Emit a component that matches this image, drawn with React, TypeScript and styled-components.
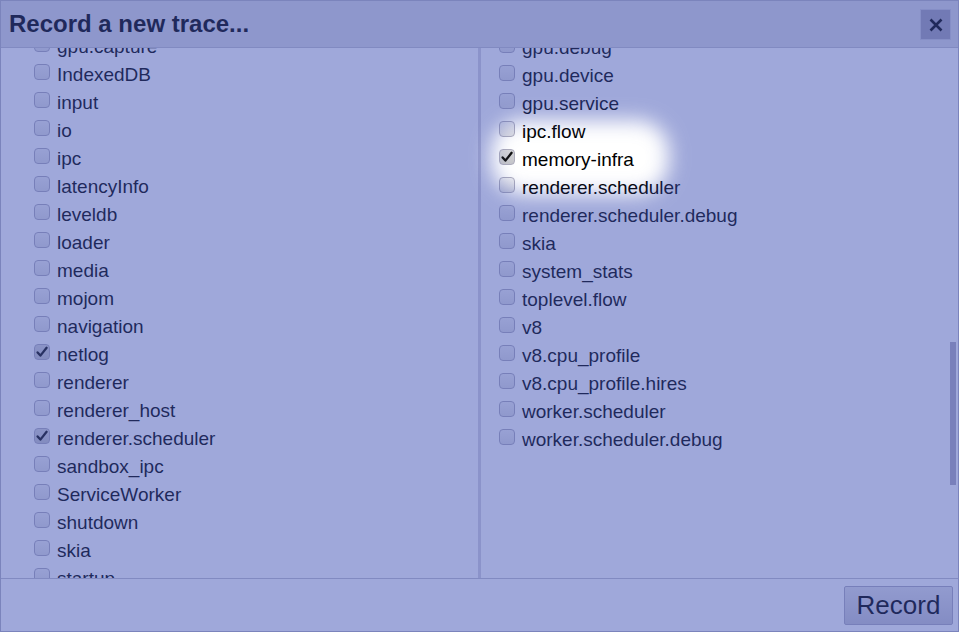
import React, { useLayoutEffect, useRef } from 'react';
import styled, { createGlobalStyle } from 'styled-components';

const leftCategories: [string, boolean][] = [
  ['accessibility', false], ['AccountFetcherService', false], ['android_webview', false],
  ['audio', false], ['base', false], ['benchmark', true], ['blink', true],
  ['blink.animations', false], ['blink.console', true], ['blink.net', false],
  ['blink.user_timing', true], ['blink_gc', false], ['Blob', false], ['browser', true],
  ['CacheStorage', false], ['camera', false], ['cast_perf_test', false], ['cc', true],
  ['cdp.perf', false], ['ChromeOS', false], ['content', true], ['devtools', false],
  ['devtools.timeline', false], ['disk_cache', false], ['download_service', false],
  ['drm', false], ['drmcursor', false], ['dwrite', false], ['DXVA Decoding', false],
  ['EarlyJava', false], ['evdev', false], ['event', false], ['exo', false],
  ['explore_sites', false], ['FileSystem', false], ['file_system_provider', false],
  ['gpu', true], ['gpu.angle', false], ['gpu.capture', false], ['IndexedDB', false],
  ['input', false], ['io', false], ['ipc', false], ['latencyInfo', false],
  ['leveldb', false], ['loader', false], ['media', false], ['mojom', false],
  ['navigation', false], ['netlog', true], ['renderer', false], ['renderer_host', false],
  ['renderer.scheduler', true], ['sandbox_ipc', false], ['ServiceWorker', false],
  ['shutdown', false], ['skia', false], ['startup', false], ['sync', false],
  ['task_scheduler', false], ['test_gpu', false], ['toplevel', true], ['ui', false],
  ['v8', true], ['v8.execute', false], ['ValueStoreFrontend::Backend', false],
  ['views', true], ['viz', false], ['webaudio', false], ['webrtc', false],
];

const rightCategories: [string, boolean][] = [
  ['animation-worklet', false], ['audio-worklet', false], ['blink.debug', false],
  ['blink.debug.layout', false], ['blink.debug.layout.trees', false],
  ['blink.feature_usage', false], ['blink.image_decoding', false],
  ['blink.invalidation', false], ['blink_gc', false], ['cc', false], ['cc.debug', false],
  ['cc.debug.cdp-perf', false], ['cc.debug.display_items', false], ['cc.debug.ipc', false],
  ['cc.debug.picture', false], ['cc.debug.quads', false], ['cc.debug.scheduler', false],
  ['cc.debug.scheduler.frames', false], ['cc.debug.scheduler.now', false],
  ['content.verbose', false], ['cpu_profiler', false], ['cpu_profiler.debug', false],
  ['devtools.screenshot', false], ['devtools.timeline', false],
  ['devtools.timeline.frame', false], ['devtools.timeline.inputs', false],
  ['devtools.timeline.invalidationTracking', false], ['devtools.timeline.layers', false],
  ['devtools.timeline.picture', false], ['devtools.timeline.stack', false],
  ['file', false], ['fonts', false], ['gpu_cmd_queue', false], ['gpu.angle', false],
  ['gpu.dawn', false], ['gpu.decoder', false], ['gpu.graphite.dawn', false],
  ['gpu.capture', false], ['gpu.debug', false], ['gpu.device', false],
  ['gpu.service', false], ['ipc.flow', false], ['memory-infra', true],
  ['renderer.scheduler', false], ['renderer.scheduler.debug', false], ['skia', false],
  ['system_stats', false], ['toplevel.flow', false], ['v8', false],
  ['v8.cpu_profile', false], ['v8.cpu_profile.hires', false], ['worker.scheduler', false],
  ['worker.scheduler.debug', false],
];

const GlobalStyle = createGlobalStyle`
  html, body {
    margin: 0;
    padding: 0;
    background: #fff;
  }
  body {
    font-family: "Liberation Sans", Arial, sans-serif;
    overflow: hidden;
  }
`;

const CategoryRow = ({ name, checked }: { name: string; checked: boolean }) => (
  <Row>
    <Box $checked={checked}>
      {checked && (
        <svg width="12" height="12" viewBox="0 0 12 12">
          <path d="M1.6 6.4 L4.4 9.6 L10.6 1.8" fill="none" stroke="#111" strokeWidth="2.3" strokeLinecap="round" strokeLinejoin="round" />
        </svg>
      )}
    </Box>
    <span>{name}</span>
  </Row>
);

const App = () => {
  const scrollRef = useRef<HTMLDivElement>(null);

  useLayoutEffect(() => {
    if (scrollRef.current) scrollRef.current.scrollTop = 1085;
  }, []);

  return (
    <>
      <GlobalStyle />
      <Dialog>
        <Header>
          <Title>Record a new trace...</Title>
          <CloseButton aria-label="Close">
            <svg width="14" height="14" viewBox="0 0 14 14">
              <path d="M1.5 1.5 L12.5 12.5 M12.5 1.5 L1.5 12.5" stroke="#000" strokeWidth="2.6" />
            </svg>
          </CloseButton>
        </Header>
        <BodyFrame>
          <Body ref={scrollRef}>
            <Columns>
              <Column $left>
                {leftCategories.map(([name, checked], i) => (
                  <CategoryRow key={i} name={name} checked={checked} />
                ))}
              </Column>
              <Column>
                {rightCategories.map(([name, checked], i) => (
                  <CategoryRow key={i} name={name} checked={checked} />
                ))}
              </Column>
            </Columns>
          </Body>
          <ScrollThumb />
        </BodyFrame>
        <Footer>
          <RecordButton>Record</RecordButton>
        </Footer>
      </Dialog>
      <Spotlight />
    </>
  );
};

export default App;

const Dialog = styled.div`
  width: 959px;
  height: 632px;
  box-sizing: border-box;
  border: 1px solid #b6b6c2;
  display: flex;
  flex-direction: column;
  background: #fff;
  color: #000;
`;

const Header = styled.header`
  flex: none;
  height: 46px;
  border-bottom: 1px solid #c2c2cc;
  background: #dddde2;
  display: flex;
  align-items: center;
  justify-content: space-between;
  padding: 0 7px 0 8px;
`;

const Title = styled.h1`
  margin: 0;
  font-size: 24px;
  font-weight: 700;
`;

const CloseButton = styled.button`
  width: 31px;
  height: 31px;
  margin-top: 1px;
  padding: 0;
  border: 1px solid #cbcbd6;
  background: #a4a3b4;
  display: flex;
  align-items: center;
  justify-content: center;
`;

const BodyFrame = styled.div`
  position: relative;
  flex: 1;
  min-height: 0;
  display: flex;
`;

const Body = styled.div`
  flex: 1;
  overflow-y: auto;
  scrollbar-width: none;

  &::-webkit-scrollbar {
    display: none;
  }
`;

const ScrollThumb = styled.div`
  position: absolute;
  right: 2px;
  top: 294px;
  width: 6px;
  height: 143px;
  background: #b2aec0;
  pointer-events: none;
`;

const Columns = styled.div`
  display: grid;
  grid-template-columns: 480px 1fr;
  align-items: start;
`;

const Column = styled.div<{ $left?: boolean }>`
  display: flex;
  flex-direction: column;
  padding: ${(p) => (p.$left ? '6px 0 6px 33px' : '7px 0 6px 18px')};
  border-right: ${(p) => (p.$left ? '3px solid #d6d4de' : 'none')};
  align-self: ${(p) => (p.$left ? 'stretch' : 'start')};
`;

const Row = styled.label`
  display: flex;
  gap: 7px;
  height: 28px;
  line-height: 28px;
  font-size: 19px;
  white-space: nowrap;
`;

const Box = styled.span<{ $checked: boolean }>`
  flex: none;
  box-sizing: border-box;
  width: 16px;
  height: 16px;
  margin-top: 3px;
  border: 1px solid #aeadbd;
  border-radius: 4px;
  background: ${(p) =>
    p.$checked ? 'linear-gradient(#d6d6d9, #c6c6ca)' : 'linear-gradient(#f0f0f2, #e0e0e4)'};
  display: flex;
  align-items: center;
  justify-content: center;
`;

const Footer = styled.footer`
  flex: none;
  height: 52px;
  border-top: 1px solid #c2c2cc;
  display: flex;
  align-items: center;
  justify-content: flex-end;
  padding-right: 5px;
`;

const RecordButton = styled.button`
  width: 109px;
  height: 39px;
  padding: 0;
  border: 1px solid #aeadbe;
  border-radius: 2px;
  background: linear-gradient(#e4e4e8, #c8c7d2);
  font-family: "Liberation Sans", Arial, sans-serif;
  font-size: 26px;
  color: #000;
`;

const Spotlight = styled.div`
  position: fixed;
  left: 491px;
  top: 120px;
  width: 178px;
  height: 74px;
  border-radius: 32px;
  box-shadow: 0 0 0 2400px rgba(63, 81, 181, 0.5);
  filter: blur(10px);
  pointer-events: none;
`;
